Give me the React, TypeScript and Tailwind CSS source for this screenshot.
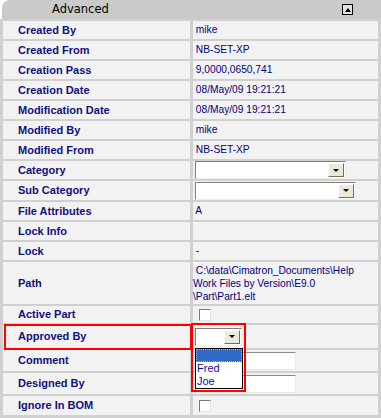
import React from "react";

// выпадающий список в стиле старого XP
const Select = ({ className }: { className: string }) => (
  <div
    className={`flex h-[18px] border border-t-[#7f7f7f] border-l-[#7f7f7f] border-b-[#f1efe2] border-r-[#f1efe2] bg-white ${className}`}
  >
    <div className="flex-1" />
    <div className="w-[16px] my-[1px] mr-[1px] bg-[#ece9d8] border border-t-white border-l-white border-b-[#716f64] border-r-[#716f64] flex items-center justify-center">
      <span className="w-0 h-0 border-l-[3px] border-r-[3px] border-t-[3px] border-l-transparent border-r-transparent border-t-black" />
    </div>
  </div>
);

const Input = () => (
  <div className="w-[101px] h-[18px] bg-white border border-t-[#8a8a8a] border-l-[#8a8a8a] border-b-[#ecebe0] border-r-[#ecebe0]" />
);

const Checkbox = () => (
  <div className="ml-[6px] w-[12px] h-[12px] bg-white border border-t-[#7a7a7a] border-l-[#7a7a7a] border-b-[#e6e6e0] border-r-[#e6e6e0]" />
);

const Text = ({ children }: { children: React.ReactNode }) => (
  <span className="whitespace-pre text-[10.2px] text-[#000080]">{children}</span>
);

type Row = { label: string; value: React.ReactNode; h: string };

const rows: Row[] = [
  { label: "Created By", value: <Text> mike</Text>, h: "h-[18px]" },
  { label: "Created From", value: <Text> NB-SET-XP</Text>, h: "h-[18px]" },
  { label: "Creation Pass", value: <Text> 9,0000,0650,741</Text>, h: "h-[18px]" },
  { label: "Creation Date", value: <Text> 08/May/09 19:21:21</Text>, h: "h-[18px]" },
  { label: "Modification Date", value: <Text> 08/May/09 19:21:21</Text>, h: "h-[18px]" },
  { label: "Modified By", value: <Text> mike</Text>, h: "h-[18px]" },
  { label: "Modified From", value: <Text> NB-SET-XP</Text>, h: "h-[18px]" },
  { label: "Category", value: <Select className="ml-[2px] w-[151px]" />, h: "h-[18px]" },
  { label: "Sub Category", value: <Select className="ml-[2px] w-[161px]" />, h: "h-[19px]" },
  { label: "File Attributes", value: <Text> A</Text>, h: "h-[18px]" },
  { label: "Lock Info", value: null, h: "h-[18px]" },
  { label: "Lock", value: <Text> -</Text>, h: "h-[18px]" },
  {
    label: "Path",
    value: (
      <div className="flex flex-col leading-[13px]">
        <Text> C:\data\Cimatron_Documents\Help</Text>
        <Text>Work Files by Version\E9.0</Text>
        <Text>\Part\Part1.elt</Text>
      </div>
    ),
    h: "h-[42px]",
  },
  { label: "Active Part", value: <Checkbox />, h: "h-[17px]" },
  { label: "Approved By", value: <Select className="ml-[2px] w-[47px]" />, h: "h-[23px]" },
  { label: "Comment", value: <div className="ml-[2px]"><Input /></div>, h: "h-[21px]" },
  { label: "Designed By", value: <div className="ml-[2px]"><Input /></div>, h: "h-[21px]" },
  { label: "Ignore In BOM", value: <Checkbox />, h: "h-[19px]" },
];

const App = () => {
  return (
    <div className="relative w-[381px] h-[418px] overflow-hidden bg-white font-['Liberation_Sans',Arial,sans-serif]">
      <div className="ml-[2px] h-[19px] bg-[#cacaca] rounded-tl-[8px] flex items-center">
        <span className="pl-[50px] text-[11.5px] text-black font-['DejaVu_Sans',sans-serif]">
          Advanced
        </span>
        <div className="ml-auto mr-[28px] w-[11px] h-[11px] border border-black bg-[#e4e4e4] flex items-center justify-center">
          <span className="w-0 h-0 border-l-[3.5px] border-r-[3.5px] border-b-[4px] border-l-transparent border-r-transparent border-b-black" />
        </div>
      </div>

      <div className="bg-[#d0d0d0] px-[3px] pt-[2px] pb-[3px] flex flex-col gap-[2px]">
        {rows.map((r) => (
          <div key={r.label} className={`grid grid-cols-[187px_185px] gap-x-[3px] ${r.h}`}>
            <div className="bg-[#f2f2f2] flex items-center pl-[15px] text-[11px] font-bold text-[#101080]">
              {r.label}
            </div>
            <div className="bg-[#f2f2f2] flex items-center">{r.value}</div>
          </div>
        ))}
      </div>

      {/* выделение красным и открытый список */}
      <div className="absolute left-[4px] top-[324px] w-[188px] h-[26px] border-2 border-[#ff0000]" />
      <div className="absolute left-[191px] top-[323px] w-[55px] h-[69px] border-2 border-[#ff0000]" />
      <div className="absolute left-[195px] top-[348px] w-[48px] h-[41px] bg-white border border-black flex flex-col text-[11px] leading-[13px] text-[#10109a]">
        <div className="h-[13px] bg-[#316ac5] border border-dotted border-[#e0b060]" />
        <div className="pl-[1px]">Fred</div>
        <div className="pl-[1px]">Joe</div>
      </div>
    </div>
  );
};

export default App;
